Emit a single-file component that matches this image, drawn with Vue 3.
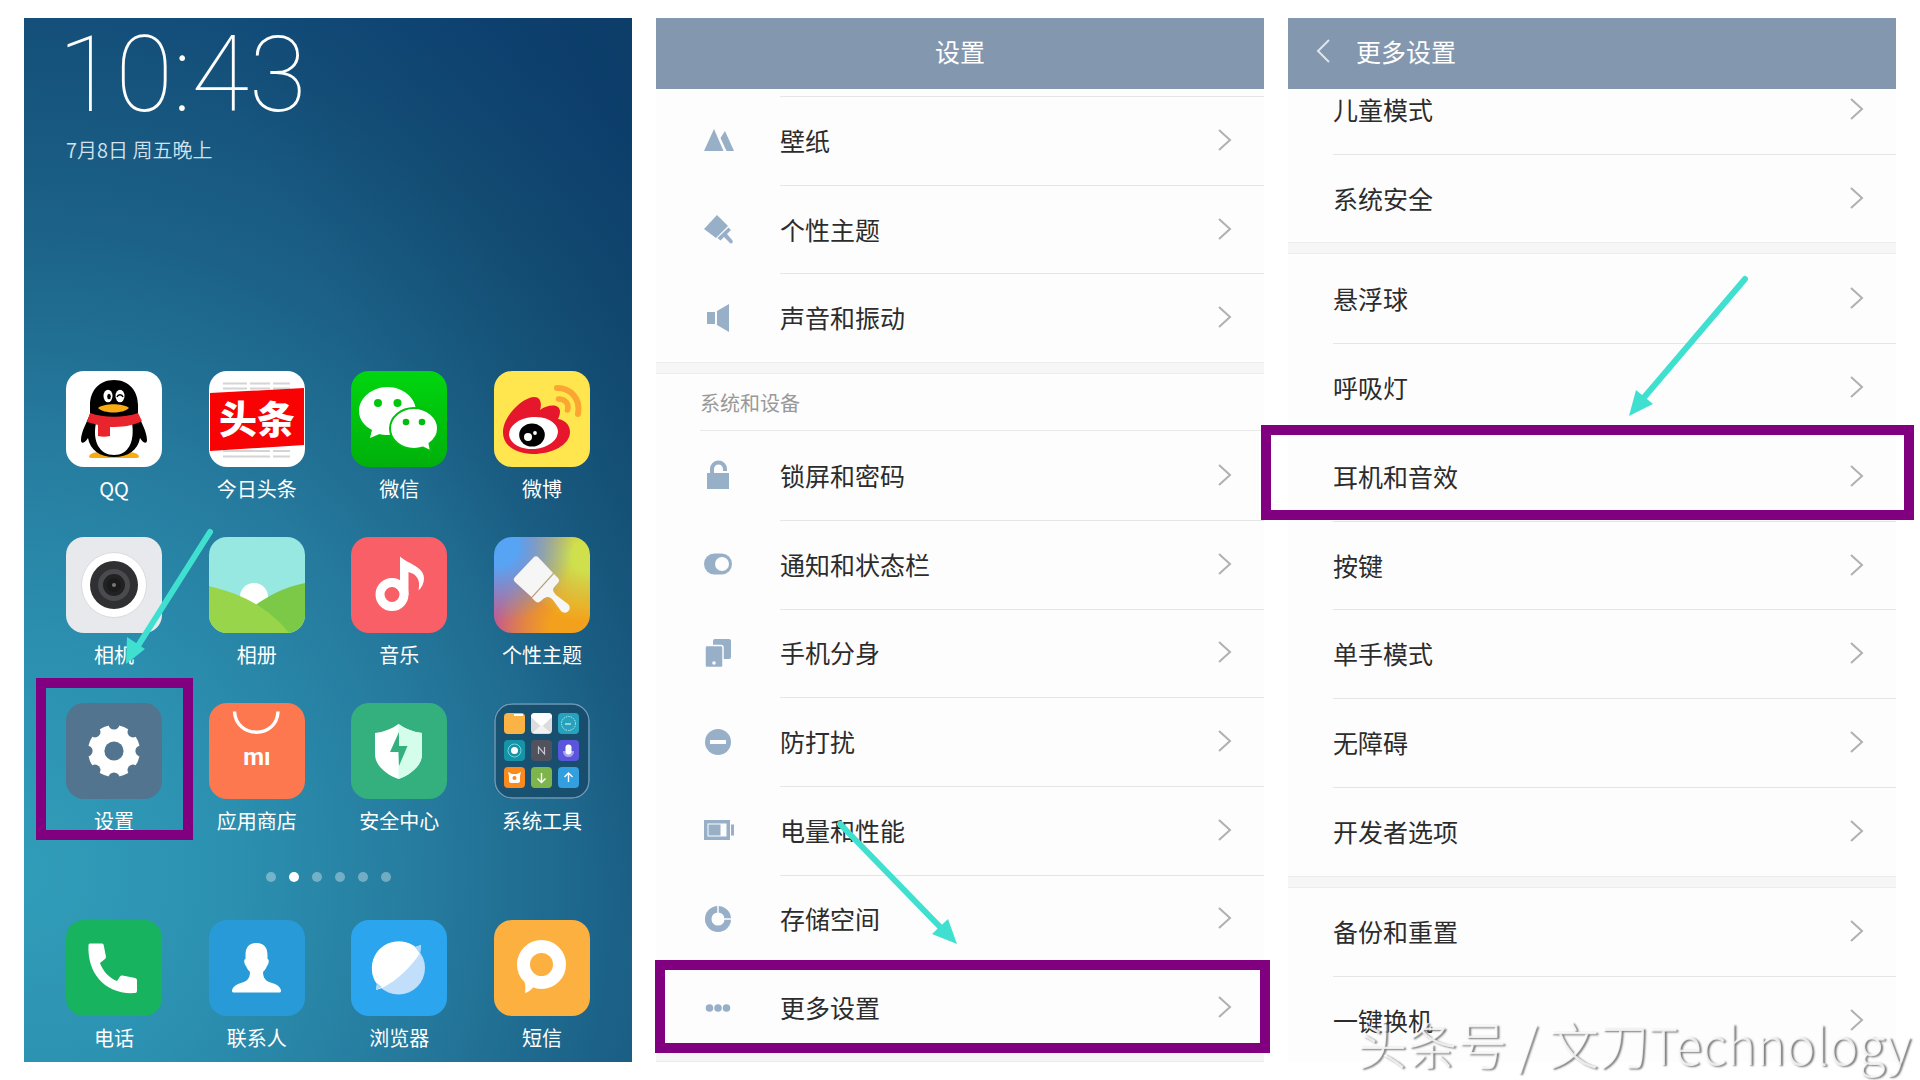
<template>
  <div class="page">
    <!-- 桌面 -->
    <section class="phone home">
      <div class="clock">10:43</div>
      <div class="date">7月8日 周五晚上</div>
      <div class="apps">
        <a v-for="app in apps" :key="app.name" class="app" href="#">
          <svg class="app-icon" viewBox="0 0 96 96" :style="{ background: app.bg }" v-html="app.svg" />
          <span class="app-name">{{ app.name }}</span>
          <i v-if="app.marked" class="mark mark-app"></i>
        </a>
      </div>
      <div class="dots">
        <i v-for="n in 6" :key="n" :class="{ on: n === 2 }"></i>
      </div>
      <div class="apps">
        <a v-for="app in dock" :key="app.name" class="app" href="#">
          <svg class="app-icon" viewBox="0 0 96 96" :style="{ background: app.bg }" v-html="app.svg" />
          <span class="app-name">{{ app.name }}</span>
        </a>
      </div>
    </section>

    <!-- 设置 -->
    <section class="phone">
      <header class="bar center"><h1>设置</h1></header>
      <div class="list">
        <div class="spacer"></div>
        <template v-for="(group, g) in settings" :key="g">
          <h2 v-if="group.title" class="group-title">{{ group.title }}</h2>
          <a v-for="(item, i) in group.items" :key="item.name" class="row" href="#">
            <svg class="row-icon" viewBox="0 0 36 36" v-html="item.svg" />
            <span class="row-body" :class="{ line: i > 0 || g === 0 }">
              <span>{{ item.name }}</span>
              <svg class="arrow" viewBox="0 0 14 24"><path d="M1 2l11 10L1 22" /></svg>
            </span>
            <i v-if="item.marked" class="mark mark-more"></i>
          </a>
          <div class="band"></div>
        </template>
      </div>
    </section>

    <!-- 更多设置 -->
    <section class="phone">
      <header class="bar">
        <button class="back" type="button" aria-label="返回">
          <svg class="arrow" viewBox="0 0 14 24"><path d="M13 1L2 12l11 11" /></svg>
        </button>
        <h1>更多设置</h1>
      </header>
      <div class="list more">
        <template v-for="(group, g) in moreSettings" :key="g">
          <div v-if="g > 0" class="band"></div>
          <a v-for="(name, i) in group" :key="name" class="row" href="#">
            <span class="row-body" :class="{ line: i > 0 }">
              <span>{{ name }}</span>
              <svg class="arrow" viewBox="0 0 14 24"><path d="M1 2l11 10L1 22" /></svg>
            </span>
            <i v-if="name === '耳机和音效'" class="mark mark-sound"></i>
          </a>
        </template>
      </div>
    </section>

    <!-- 操作指引箭头 -->
    <svg class="guides" viewBox="0 0 1920 1080">
      <g v-for="(a, i) in guides" :key="i">
        <path :d="a.line" class="guide-line" />
        <path :d="a.head" class="guide-head" />
      </g>
    </svg>
    <div class="watermark">头条号 / 文刀Technology</div>
  </div>
</template>

<script setup>
// 齿轮图标：圆盘边缘挖 8 个缺口
const notches = Array.from({ length: 8 }, (_, i) => {
  const t = (i * Math.PI) / 4
  return `<circle cx="${48 + 27 * Math.cos(t)}" cy="${48 + 27 * Math.sin(t)}" r="5.6" fill="#53748e"/>`
}).join('')

const apps = [
  {
    name: 'QQ',
    bg: '#fff',
    svg: `<path d="M23 86c0-4 7-5 12-5h26c5 0 12 1 12 5 0 1-4 1-8 1H31c-4 0-8 0-8-1z" fill="#f9ab14"/>
      <path d="M48 9c15 0 24 11 24 25v9c3 8 9 18 9 26 0 4-3 4-7-2-2 12-12 19-26 19s-24-7-26-19c-4 6-7 6-7 2 0-8 6-18 9-26v-9C24 20 33 9 48 9z"/>
      <path d="M30 52h36c3 19-4 32-18 32S26 71 30 52z" fill="#fff"/>
      <ellipse cx="42" cy="25" rx="4.5" ry="6.3" fill="#fff"/><ellipse cx="54" cy="25" rx="4.5" ry="6.3" fill="#fff"/>
      <ellipse cx="43" cy="25.500" rx="1.800" ry="2.800"/><path d="M51 26c1-3 5-3 6 0" fill="none" stroke="#000" stroke-width="1.500"/>
      <path d="M32 37c6-5 25-5 31 0-6 6-25 6-31 0z" fill="#f9ab14"/>
      <path d="M24 42c14 5 34 5 48 0l4 8c-9 5-20 6-32 6v9c-4 1-8 1-12 0V54c-4-1-7-2-11-3z" fill="#e8242c"/>`,
  },
  {
    name: '今日头条',
    bg: '#fff',
    svg: `<path d="M14 12.500h24M41 12.500h20M64 12.500h17M14 17.500h24M41 17.500h20M64 17.500h17M14 80h47M64 80h17M14 85.500h47M64 85.500h17" stroke="#d4d4d4" stroke-width="2"/>
      <path d="M1 22l94-5v57L1 80z" fill="#f80204"/>
      <text x="48" y="62" text-anchor="middle" font-size="38" font-weight="900" fill="#fff" font-family="Noto Sans CJK SC">头条</text>`,
  },
  {
    name: '微信',
    bg: 'linear-gradient(#00d60f, #00b00b)',
    svg: `<path d="M36.500 16C52 16 65 27 65 40S52 64 36.500 64c-3 0-6-.4-8-1L19 67l2-8C13 55 8 48 8 40c0-13 13-24 28.500-24z" fill="#fff"/>
      <circle cx="27" cy="32" r="4" fill="#00c60d"/><circle cx="46.500" cy="32" r="4" fill="#00c60d"/>
      <path d="M63 37c13 0 24 9 24 20.500 0 6-3 11-8.500 15l1.500 8-8-4c-3 1-6 1.500-9 1.500-13 0-24-9-24-20.500S50 37 63 37z" fill="#fff" stroke="#00c00c" stroke-width="2"/>
      <circle cx="55" cy="51" r="3.300" fill="#00bc0c"/><circle cx="71" cy="51" r="3.300" fill="#00bc0c"/>`,
  },
  {
    name: '微博',
    bg: '#ffe54e',
    svg: `<path d="M9 61C9 46 27 27 40 26c7 0 8 7 6 13 7-5 19-7 20 1 0 3-1 6-2 8 7 1 12 6 12 13 0 13-18 22-37 22C22 83 9 75 9 61z" fill="#e6162d"/>
      <ellipse cx="39.500" cy="62" rx="24.500" ry="16" fill="#fff" transform="rotate(-5 39.500 62)"/>
      <ellipse cx="38" cy="64" rx="12.800" ry="11.500"/><circle cx="34" cy="66" r="4" fill="#fff"/><circle cx="41" cy="62" r="1.900" fill="#fff"/>
      <path d="M63 17c13 0 24 10 21 26" fill="none" stroke="#fba533" stroke-width="6" stroke-linecap="round"/>
      <path d="M64.500 28c7 0 11 5 9 11" fill="none" stroke="#fba533" stroke-width="5.500" stroke-linecap="round"/>`,
  },
  {
    name: '相机',
    bg: '#e8e9ed',
    svg: `<circle cx="48" cy="48" r="32.500" fill="#fff" stroke="#d9dade"/><circle cx="48" cy="48" r="24" fill="#303032"/>
      <circle cx="48" cy="48" r="13.500" fill="#222224" stroke="#4a4b4e" stroke-width="5"/><circle cx="48" cy="48" r="7" fill="#1b1b1c"/><circle cx="48" cy="48" r="2" fill="#77787a"/>`,
  },
  {
    name: '相册',
    bg: '#98e8e2',
    svg: `<circle cx="45" cy="60" r="14" fill="#fff"/><path d="M96 46C76 50 58 59 44 70l30 26h22z" fill="#7bc946"/>
      <path d="M0 49c34 8 60 22 80 47H0z" fill="#98d54b"/>`,
  },
  {
    name: '音乐',
    bg: '#f95f67',
    svg: `<circle cx="41" cy="57.500" r="12" fill="none" stroke="#fff" stroke-width="9"/>
      <path d="M49 19.500c9 8 24 10 24 22 0 4-2 9-5.500 12C70 42 65 37 57.500 35v23H49z" fill="#fff"/>`,
  },
  {
    name: '个性主题',
    bg: 'radial-gradient(circle at 5% 10%, #58a4f4 15%, transparent 60%), radial-gradient(circle at 95% 20%, #cfe04c 12%, transparent 55%), radial-gradient(circle at 85% 95%, #f3a11c 20%, transparent 65%), linear-gradient(90deg, #c65a8c, #e0813a)',
    svg: `<path d="M39.500 20.500q2.500-2.500 5 0L59 36 37.500 60 21 45q-2.500-2.500 0-5z" fill="#f6f6f6"/>
      <path d="M60 37l4 4c2 2 1 4-1 6-5 5-5 6-1 11l12 9c5 5-2 12-7 7l-8-11c-4-5-8-3-11 0-3 3-5 3-7 1l-3-3z" fill="#f6f6f6"/>`,
  },
  {
    name: '设置',
    bg: '#53748e',
    marked: true,
    svg: `<circle cx="48" cy="48" r="26" fill="#fff"/>${notches}<circle cx="48" cy="48" r="9.600" fill="#53748e"/>`,
  },
  {
    name: '应用商店',
    bg: '#fd774f',
    svg: `<path d="M25.500 8.500C27 36 68 36 69 8.500" fill="none" stroke="#fff" stroke-width="3.500"/>
      <text x="48" y="61.500" text-anchor="middle" font-size="24" font-weight="700" fill="#fff" font-family="Roboto">mı</text>`,
  },
  {
    name: '安全中心',
    bg: '#34af7e',
    svg: `<path d="M47.500 21c7 5 15 8 23.500 9v21c0 12-12 21-23.500 25C36 72 24 63 24 51V30c8.500-1 16.500-4 23.500-9z" fill="#fff"/>
      <path d="M47.500 21c7 5 15 8 23.500 9v21c0 12-12 21-23.500 25z" fill="#d4fdec"/>
      <path d="M48 29l-9 20h8.500l.5 14 8.500-20H48z" fill="#34af7e"/>`,
  },
  {
    name: '系统工具',
    bg: 'rgba(22, 66, 96, 0.65)',
    svg: `<rect x="1" y="1" width="94" height="94" rx="17" fill="none" stroke="#6b9ab8" stroke-width="1.500"/>
      <g transform="translate(10 10)"><rect width="21" height="21" rx="4" fill="#fbb346"/><path d="M10 2h9" stroke="#fff" stroke-width="2"/></g>
      <g transform="translate(37 10)"><rect width="21" height="21" rx="4" fill="#dcdcdc"/><path d="M0 4q0-4 4-4h13q4 0 4 4L10.500 14z" fill="#fff"/><path d="M1 20l9.500-8 9.500 8z" fill="#f2f2f2"/></g>
      <g transform="translate(64 10)"><rect width="21" height="21" rx="4" fill="#27a2bd"/><circle cx="10.500" cy="10.500" r="7" fill="none" stroke="#b9e6ee" stroke-dasharray="1.500 1"/><path d="M7 11h6" stroke="#fff"/></g>
      <g transform="translate(10 37)"><rect width="21" height="21" rx="4" fill="#1494a6"/><circle cx="10.500" cy="10.500" r="6.500" fill="none" stroke="#7fd0d8"/><circle cx="10.500" cy="10.500" r="3.500" fill="#fff"/></g>
      <g transform="translate(37 37)"><rect width="21" height="21" rx="4" fill="#52525e"/><path d="M7.500 14V7l6 7V7" fill="none" stroke="#c8c8d0" stroke-width="1.200"/></g>
      <g transform="translate(64 37)"><rect width="21" height="21" rx="4" fill="#5b55dc"/><path d="M5 11c0 8 11 8 11 0z" fill="#a9a4f2"/><rect x="7.500" y="4.500" width="6" height="10" rx="3" fill="#fff"/></g>
      <g transform="translate(10 64)"><rect width="21" height="21" rx="4" fill="#f98a1b"/><path d="M4 5l4 2h5l4-2-1 4v5q0 2-3 2H8q-3 0-3-2V9z" fill="#fff"/><circle cx="10.500" cy="11" r="2" fill="#f98a1b"/></g>
      <g transform="translate(37 64)"><rect width="21" height="21" rx="4" fill="#7db54c"/><path d="M10.500 6v9M6.500 11.500l4 4 4-4" fill="none" stroke="#fff" stroke-width="1.400"/></g>
      <g transform="translate(64 64)"><rect width="21" height="21" rx="4" fill="#319fe0"/><path d="M10.500 15V6M6.500 10l4-4 4 4" fill="none" stroke="#fff" stroke-width="1.400"/></g>`,
  },
]

const dock = [
  {
    name: '电话',
    bg: '#18b35f',
    svg: `<path d="M24 23.500h12q1.500 0 1.700 1.500L40 37q0 1-1 2l-5 4c3 8 9 15 17 18l3-4.500q1-1.500 2.500-1L69 58q2 .5 2 2v11q0 2-2 2C40 75 21 54 22.500 25q0-1.500 1.500-1.500z" fill="#fff"/>`,
  },
  {
    name: '联系人',
    bg: '#279ad7',
    svg: `<path d="M47.500 23c8 0 11 5 11 12v4c2 0 1.500 5-.5 7-1 3-3 5-4 6 0 9 6 10 12 12 4 2 6 4 6 7 0 1-1 1.500-2 1.500H25c-1 0-2-.5-2-1.500 0-3 2-5 6-7 6-2 12-3 12-12-1-1-3-3-4-6-2-2-2.500-7-.5-7v-4c0-7 3-12 11-12z" fill="#fff"/>`,
  },
  {
    name: '浏览器',
    bg: '#2ba5ee',
    svg: `<circle cx="47.500" cy="48" r="26.500" fill="#c1defb"/><path d="M70 25l-1 8C60 47 47 60 31 68l-6 2 1-6C14 48 24 21.500 47.500 21.500c7 0 13 2 17 5.500z" fill="#fff"/><path d="M64 27l6-2-1 9z" fill="#a9d8fa"/><path d="M26 63l-1 7 6-3z" fill="#a9d8fa"/>`,
  },
  {
    name: '短信',
    bg: '#fcb040',
    svg: `<circle cx="47.500" cy="44.500" r="18" fill="none" stroke="#fff" stroke-width="13"/><path d="M28 56c3 5 4 10 3 17 4-1 7-4 9-7l-1-5z" fill="#fff"/>`,
  },
]

const settings = [
  {
    items: [
      { name: '壁纸', svg: '<path d="M14 7l9.500 22H4zM25 9l9 20h-7.500l-6-13z"/>' },
      { name: '个性主题', svg: '<path d="M17 4l11 11-12 12L4 18z"/><path d="M28.500 16.500l2.500 2.500-4 4 5.500 6.500q1 3-2 3L24 26l-3.500 3.500-3-2.500z"/>' },
      { name: '声音和振动', svg: '<path d="M7 12h8v12H7zM17 11l12-7v28l-12-7z"/>' },
    ],
  },
  {
    title: '系统和设备',
    items: [
      { name: '锁屏和密码', svg: '<path d="M7 16h22v16H7z"/><path d="M12 17v-5a6.500 6.500 0 0 1 13 0v2" fill="none" stroke="#97afc7" stroke-width="4"/>' },
      { name: '通知和状态栏', svg: '<rect x="4" y="7.500" width="28" height="21" rx="10.500"/><circle cx="22" cy="18" r="7" fill="#fdfdfd"/>' },
      { name: '手机分身', svg: '<rect x="13" y="4" width="18" height="20" rx="2"/><rect x="5" y="10.500" width="18" height="22" rx="2" stroke="#fdfdfd" stroke-width="1.500"/><circle cx="14" cy="28" r="1.800" fill="#fdfdfd"/>' },
      { name: '防打扰', svg: '<circle cx="18" cy="18" r="13"/><path d="M10 16h16v4H10z" fill="#fdfdfd"/>' },
      { name: '电量和性能', svg: '<path d="M4 8h26v20H4z"/><path d="M7.500 11.500h19v13h-19z" fill="#fdfdfd"/><path d="M8.500 12.500h12v11h-12zM31 12.500h3v11h-3z"/>' },
      { name: '存储空间', svg: '<circle cx="18" cy="18" r="9.800" fill="none" stroke="#97afc7" stroke-width="6.500"/><path d="M18 3v10M23 18h10" stroke="#fdfdfd" stroke-width="1.500"/>' },
      { name: '更多设置', marked: true, svg: '<circle cx="9.500" cy="18" r="3.800"/><circle cx="18" cy="18" r="3.800"/><circle cx="26.500" cy="18" r="3.800"/>' },
    ],
  },
]

const moreSettings = [
  ['儿童模式', '系统安全'],
  ['悬浮球', '呼吸灯', '耳机和音效', '按键', '单手模式', '无障碍', '开发者选项'],
  ['备份和重置', '一键换机'],
]

const guides = [
  { line: 'M210 532L136 649', head: 'M126 664l1-27 18 12z' },
  { line: 'M840 824L944 931', head: 'M957 944l-25-10 16-15z' },
  { line: 'M1745 279L1641 401', head: 'M1629 416l7-26 17 14z' },
]
</script>

<style>
body { margin: 0; background: #fff; }
</style>

<style scoped>
.page {
  position: relative;
  display: grid;
  grid-template-columns: repeat(3, 1fr);
  gap: 24px;
  box-sizing: border-box;
  min-height: 100vh;
  padding: 18px 24px;
  overflow: hidden;
  font-family: "Noto Sans CJK SC", sans-serif;
}
a { color: inherit; text-decoration: none; }
h1, h2 { margin: 0; font-weight: 400; }
.phone { display: flex; flex-direction: column; min-width: 0; }

/* 桌面 */
.home {
  box-sizing: border-box;
  padding: 8px 42px 10px;
  color: #fff;
  background:
    linear-gradient(65deg, transparent 60%, rgba(8, 44, 72, 0.35)),
    radial-gradient(150% 95% at 0% 82%, #319db9 0%, #2c91b1 22%, #257a9d 45%, #1c6288 65%, #14507a 85%, #0f467a 100%);
}
.clock {
  margin-left: -8px;
  font-family: Roboto, "Noto Sans CJK SC", sans-serif;
  font-size: 105px;
  font-weight: 100;
  line-height: 100px;
}
.date { margin-top: 10px; font-size: 20px; font-weight: 350; line-height: 28px; color: #d2e3ef; }
.apps { display: grid; grid-template-columns: repeat(4, 96px); justify-content: space-between; row-gap: 34px; }
.date + .apps { margin-top: auto; }
.app { position: relative; display: flex; flex-direction: column; align-items: center; gap: 8px; }
.app-icon { width: 96px; height: 96px; border-radius: 18px; }
.app-name { font-size: 20px; line-height: 28px; white-space: nowrap; }
.dots { display: flex; justify-content: center; gap: 13px; margin: 37px 0 38px; }
.dots i { width: 10px; height: 10px; border-radius: 50%; background: rgba(255, 255, 255, 0.35); }
.dots i.on { background: #fff; }

/* 标题栏 */
.bar {
  position: relative;
  z-index: 1;
  display: flex;
  align-items: center;
  gap: 26px;
  height: 71px;
  padding: 0 28px 6px;
  box-sizing: border-box;
  color: #fff;
  background: #8397af;
}
.bar.center { justify-content: center; }
.bar h1 { font-size: 25px; line-height: 36px; }
.back { display: flex; padding: 0; border: 0; background: none; }
.back .arrow { stroke: #dfe5ec; }

/* 列表 */
.list { display: flex; flex: 1; flex-direction: column; overflow-y: clip; background: #fdfdfd; }
.spacer { height: 7px; }
.row { position: relative; display: flex; flex: 1; align-items: center; padding-left: 44px; }
.row-icon { width: 36px; height: 36px; margin-right: 44px; fill: #97afc7; }
.row-body {
  display: flex;
  flex: 1;
  align-items: center;
  justify-content: space-between;
  align-self: stretch;
  padding: 0 32px 2px 0;
  border-top: 1px solid transparent;
  font-size: 25px;
  line-height: 36px;
  color: #2c2c2c;
}
.row-body.line { border-top-color: #e6e6e6; }
.arrow { width: 14px; height: 24px; fill: none; stroke: #b0b0b0; stroke-width: 2; }
.group-title {
  height: 57px;
  margin-left: 44px;
  box-sizing: border-box;
  border-bottom: 1px solid #e9e9e9;
  font-size: 20px;
  line-height: 57px;
  color: #999;
}
.band { height: 12px; box-sizing: border-box; border: solid #ececec; border-width: 1px 0; background: #f6f6f6; }
.list > .band:last-child { height: 10px; }
.more { margin-top: -24px; }
.more .row { padding-left: 45px; }
.more .row:last-child { margin-bottom: -3px; }

/* 紫色标注框 */
.mark { position: absolute; z-index: 2; border: 10px solid #800080; }
.mark-app { inset: -25px -31px -5px -30px; }
.mark-more { inset: -3px -6px -1px -1px; }
.mark-sound { inset: -7px -18px 1px -27px; }

.guides { position: absolute; inset: 0; z-index: 3; width: 100%; height: 100%; pointer-events: none; }
.guide-line { fill: none; stroke: #40e0d0; stroke-width: 6; stroke-linecap: round; }
.guide-head { fill: #40e0d0; }
.watermark {
  position: absolute;
  right: 9px;
  bottom: 1px;
  z-index: 4;
  font-size: 50px;
  font-weight: 300;
  line-height: 72px;
  color: rgba(255, 255, 255, 0.8);
  text-shadow: 2px 1px 2px #777;
  white-space: nowrap;
}
</style>
